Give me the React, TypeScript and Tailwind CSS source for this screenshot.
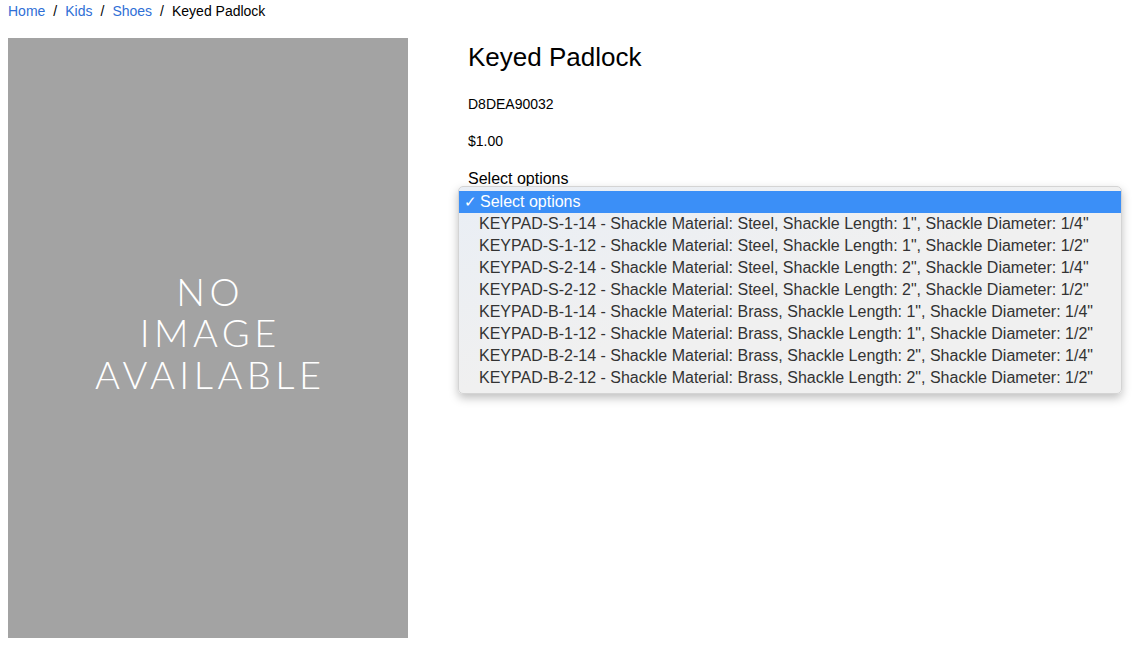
import React from 'react';

const options = [
  'KEYPAD-S-1-14 - Shackle Material: Steel, Shackle Length: 1", Shackle Diameter: 1/4"',
  'KEYPAD-S-1-12 - Shackle Material: Steel, Shackle Length: 1", Shackle Diameter: 1/2"',
  'KEYPAD-S-2-14 - Shackle Material: Steel, Shackle Length: 2", Shackle Diameter: 1/4"',
  'KEYPAD-S-2-12 - Shackle Material: Steel, Shackle Length: 2", Shackle Diameter: 1/2"',
  'KEYPAD-B-1-14 - Shackle Material: Brass, Shackle Length: 1", Shackle Diameter: 1/4"',
  'KEYPAD-B-1-12 - Shackle Material: Brass, Shackle Length: 1", Shackle Diameter: 1/2"',
  'KEYPAD-B-2-14 - Shackle Material: Brass, Shackle Length: 2", Shackle Diameter: 1/4"',
  'KEYPAD-B-2-12 - Shackle Material: Brass, Shackle Length: 2", Shackle Diameter: 1/2"',
];

const crumbs = ['Home', 'Kids', 'Shoes'];

export default function App() {
  return (
    <div className="min-h-screen bg-white px-2 text-black" style={{ fontFamily: '"Liberation Sans", Arial, sans-serif' }}>
      {/* breadcrumb */}
      <nav className="flex h-[22px] items-center text-[14px] leading-none">
        {crumbs.map((c) => (
          <React.Fragment key={c}>
            <a href="#" className="text-[#2f6fd6]">{c}</a>
            <span className="mx-2">/</span>
          </React.Fragment>
        ))}
        <span>Keyed Padlock</span>
      </nav>

      <div className="mt-4 flex gap-[60px]">
        <div className="flex h-[600px] w-[400px] shrink-0 flex-col items-center justify-center bg-[#a3a3a3] pb-[10px] text-center text-[38px] font-light leading-[41.5px] tracking-[4.5px] text-white" style={{ fontFamily: 'Lato, "Open Sans", sans-serif' }}>
          <span className="pl-[4.5px]">NO</span>
          <span className="pl-[4.5px]">IMAGE</span>
          <span className="pl-[4.5px]">AVAILABLE</span>
        </div>

        <div className="relative flex-1 pt-[4px]">
          <h1 className="text-[26px] leading-[30px]">Keyed Padlock</h1>
          <p className="mt-[24px] text-[14px] leading-[16px]">D8DEA90032</p>
          <p className="mt-[21px] text-[14px] leading-[16px]">$1.00</p>
          <label className="mt-[21px] block text-[16px] leading-[18px]">Select options</label>

          {/* open native-style select menu */}
          <div className="absolute left-[-10px] top-[148px] w-[664px] rounded-[5px] border border-[#d4d4d4] bg-gradient-to-br from-[#e9eef5] via-[#f0f0f0] to-[#f0f0f0] py-[4px] shadow-[0_4px_10px_rgba(0,0,0,0.25)]" style={{ fontFamily: '"Liberation Sans", Arial, sans-serif' }}>
            <div className="flex h-[22px] items-center bg-[#3b8ff7] text-[16px] text-white">
              <span className="w-[21px] pl-[5px] text-[15px]">✓</span>
              <span>Select options</span>
            </div>
            {options.map((o) => (
              <div key={o} className="flex h-[22px] items-center text-[16px] text-[#333]">
                <span className="w-[20px]" />
                <span className="whitespace-nowrap">{o}</span>
              </div>
            ))}
          </div>
        </div>
      </div>
    </div>
  );
}
